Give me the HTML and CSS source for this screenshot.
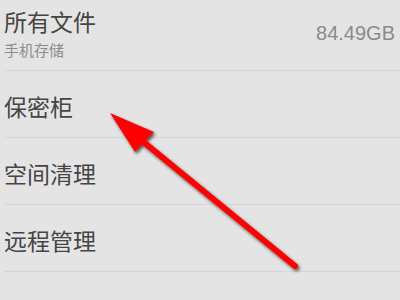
FILE: index.html
```html
<!DOCTYPE html>
<html>

<head>
    <title>文件管理</title>
    <link rel="stylesheet" href="styles.css">
</head>

<body>
    <div class="list">
        <div class="row row-first">
            <div class="row-text">
                <div class="row-title">所有文件</div>
                <div class="row-sub">手机存储</div>
            </div>
            <div class="row-size">84.49GB</div>
        </div>
        <div class="row">
            <div class="row-title">保密柜</div>
        </div>
        <div class="row">
            <div class="row-title">空间清理</div>
        </div>
        <div class="row">
            <div class="row-title">远程管理</div>
        </div>
        <div class="row row-last"></div>
    </div>

    <svg class="arrow" width="400" height="300" viewBox="0 0 400 300">
        <defs>
            <filter id="shadow" x="-20%" y="-20%" width="140%" height="140%">
                <feDropShadow dx="1.5" dy="2" stdDeviation="1.6" flood-color="#222" flood-opacity="0.75" />
            </filter>
        </defs>
        <g filter="url(#shadow)">
            <line x1="295" y1="266" x2="135" y2="135" stroke="#ff0000" stroke-width="6" stroke-linecap="round" />
            <polygon points="110,113 154,132 135,152" fill="#ff0000" />
        </g>
    </svg>
</body>

</html>
```

FILE: styles.css
```css
body {
    margin: 0;
    width: 400px;
    height: 300px;
    overflow: hidden;
    background-color: #e4e4e4;
    font-family: "Noto Sans CJK SC", "Liberation Sans", sans-serif;
    position: relative;
}

.list {
    display: flex;
    flex-direction: column;
    padding-left: 4px;
}

.row {
    height: 66px;
    border-bottom: 1px solid #d6d6d6;
    display: flex;
    align-items: center;
    justify-content: space-between;
    padding-right: 5px;
}

.row-first {
    height: 70px;
    align-items: flex-start;
}

.row-text {
    display: flex;
    flex-direction: column;
    gap: 6px;
    padding-top: 8px;
}

.row-title {
    font-size: 23px;
    line-height: 27px;
    color: #454545;
}

.row-sub {
    font-size: 15px;
    line-height: 18px;
    color: #8c8c8c;
}

.row-size {
    font-family: "Liberation Sans", sans-serif;
    font-size: 20px;
    color: #8a8a8a;
    padding-top: 22px;
}

.row + .row .row-title {
    padding-top: 4px;
}

.row-last {
    height: 26px;
    border-bottom: 0;
}

.arrow {
    position: absolute;
    left: 0;
    top: 0;
}
```
